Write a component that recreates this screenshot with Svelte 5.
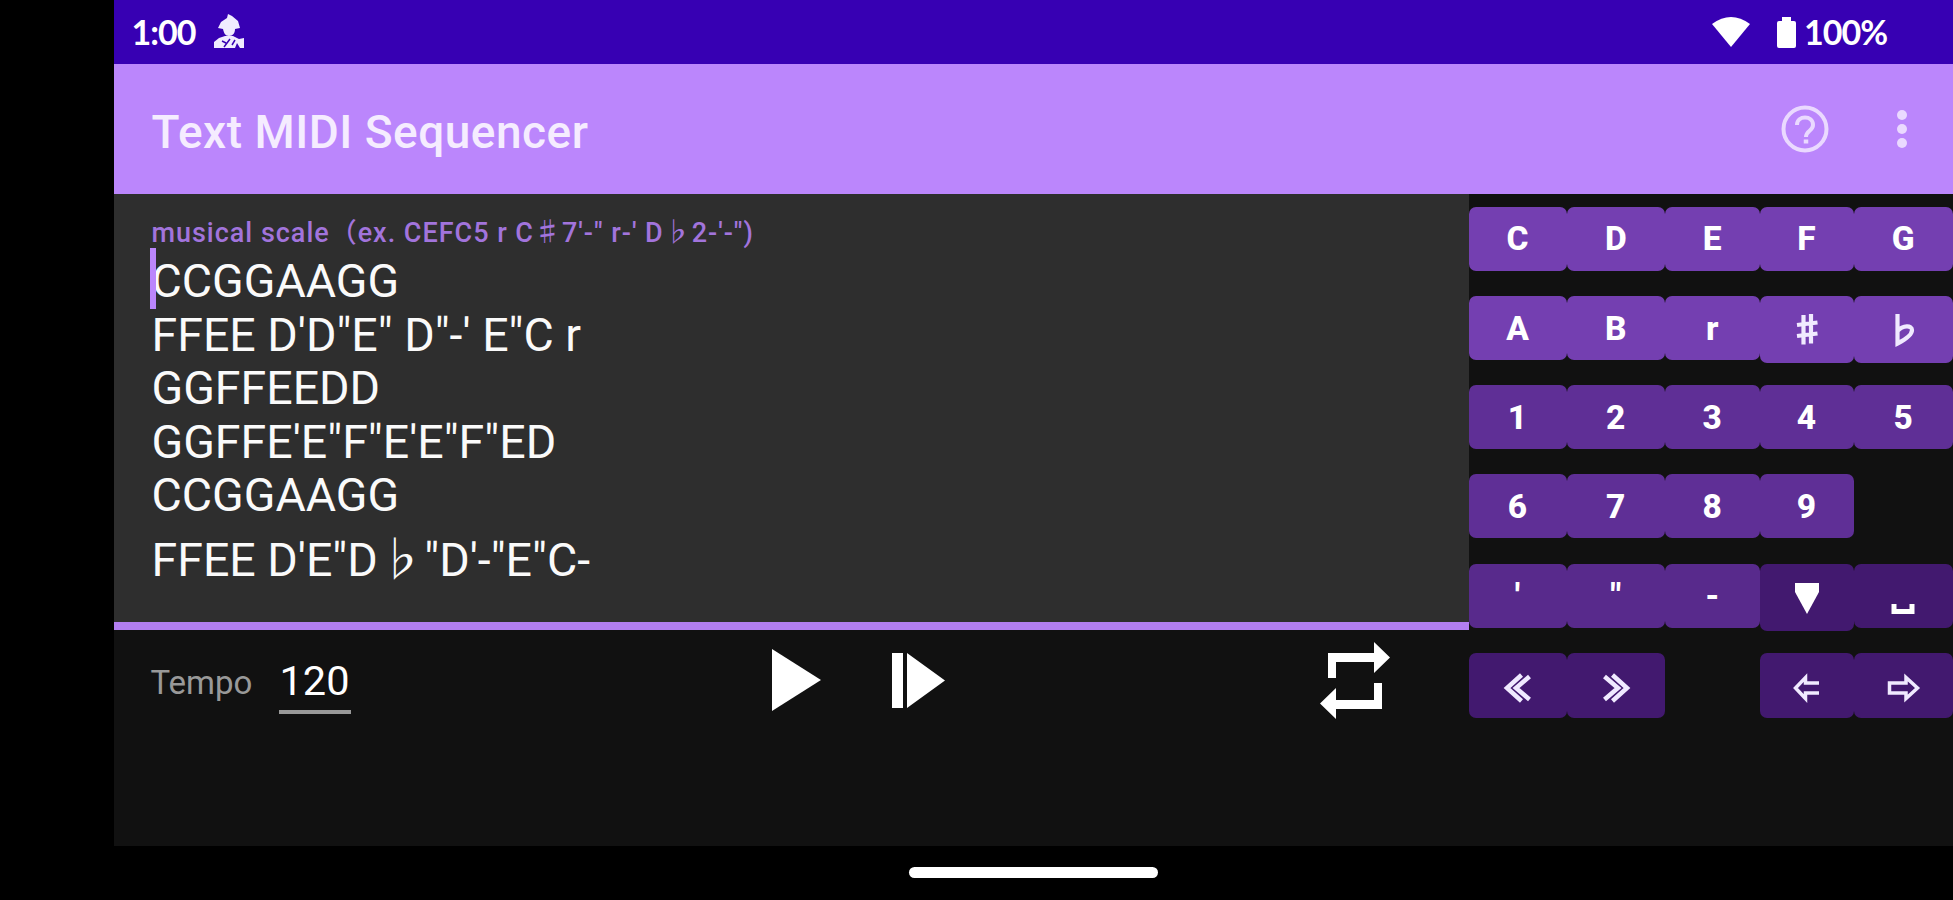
<script lang="ts">
    type Key = { label?: string; icon?: string; tone: string; tall?: boolean; name?: string };

    const hint = 'musical scale\uff08ex. CEFC5 r C♯7\'-" r-\' D♭2-\'-")';

    const lines = [
        'CCGGAAGG',
        'FFEE D\'D"E" D"-\' E"C r',
        'GGFFEEDD',
        'GGFFE\'E"F"E\'E"F"ED',
        'CCGGAAGG',
        'FFEE D\'E"D♭"D\'-"E"C-'
    ];

    const keys: (Key | null)[][] = [
        ['C', 'D', 'E', 'F', 'G'].map((label) => ({ label, tone: 'note' })),
        [
            { label: 'A', tone: 'note' },
            { label: 'B', tone: 'note' },
            { label: 'r', tone: 'note' },
            { icon: 'sharp', tone: 'note', tall: true, name: 'Sharp' },
            { icon: 'flat', tone: 'note', tall: true, name: 'Flat' }
        ],
        ['1', '2', '3', '4', '5'].map((label) => ({ label, tone: 'octave' })),
        [...['6', '7', '8', '9'].map((label) => ({ label, tone: 'octave' })), null],
        [
            { label: "'", tone: 'length' },
            { label: '"', tone: 'length' },
            { label: '-', tone: 'length' },
            { icon: 'enter', tone: 'edit', tall: true, name: 'New line' },
            { icon: 'space', tone: 'edit', name: 'Space' }
        ],
        [
            { icon: 'first', tone: 'edit', name: 'To start' },
            { icon: 'last', tone: 'edit', name: 'To end' },
            null,
            { icon: 'left', tone: 'edit', name: 'Left' },
            { icon: 'right', tone: 'edit', name: 'Right' }
        ]
    ];

    // paths on a 36x36 box
    const icons: Record<string, string> = {
        sharp: 'M14.5 4v29.5M22 3v29.500M8 14l20.500-2.500M8 25l20.500-2.500',
        flat: 'M12.500 3v29.500c8-4 14.500-8.500 14.500-13.500 0-5-9-5-14.500 1',
        enter: 'M6 4h24v9L18 35 6 13z',
        space: 'M9 26v7.500h18V26',
        first: 'M21.500 7L7 20l14.500 13M29.500 8.500L16 20l13.500 11.500',
        last: 'M14.500 7L29 20 14.500 33M6.500 8.500L20 20 6.500 31.500',
        left: 'M30 15H16.500V9.500L6.500 20l10 10.500V25H30',
        right: 'M4.500 15H21V9.500L32.500 20 21 30.500V25H4.500z'
    };
</script>

<div class="screen">
    <div class="main">
        <div class="status">
            <div class="status-side">
                <span class="clock">1:00</span>
                <svg width="32" height="36" viewBox="0 0 32 36" fill="#f0ecff">
                    <path d="M15 0l4 2 6 5 2 7-5 1c0 4-2 7-6 7s-5-3-6-7l-5-1 3-6 6-4z" />
                    <path d="M1 34v-6l5-4 6-2h8l6 3 5-1v10h-4l-3-5-2 5z" />
                    <path d="M9 27l4 2M17 25l-3 4-3 4M22 26l-3 5" stroke="#3700b3" stroke-width="1.500" fill="none" />
                </svg>
            </div>
            <div class="status-side right">
                <svg class="wifi" width="38" height="30" viewBox="0 0 38 30" fill="#fff">
                    <path d="M0 7Q19-7 38 7L19 30z" />
                </svg>
                <svg class="battery" width="19" height="31" viewBox="0 0 19 31" fill="#fff">
                    <path d="M5 0h9v4h3q2 0 2 2v23q0 2-2 2H2q-2 0-2-2V6q0-2 2-2h3z" />
                </svg>
                <span class="percent">100%</span>
            </div>
        </div>

        <header class="appbar">
            <h1>Text MIDI Sequencer</h1>
            <button class="help" aria-label="Help">
                <svg width="48" height="48" viewBox="0 0 48 48" fill="none" stroke="#ead9ff">
                    <circle cx="24" cy="24" r="21.500" stroke-width="4" />
                    <path d="M16 20c0-10 16-10 16 0 0 6-7 5.500-7 12" stroke-width="4" />
                    <path d="M25 34.500v4" stroke-width="4.500" />
                </svg>
            </button>
            <button class="more" aria-label="More options">
                <svg width="12" height="40" viewBox="0 0 12 40" fill="#ead9ff">
                    <circle cx="6" cy="6" r="5" />
                    <circle cx="6" cy="20" r="5" />
                    <circle cx="6" cy="34" r="5" />
                </svg>
            </button>
        </header>

        <div class="body">
            <div class="left">
                <div class="editor">
                    <div class="hint">{hint}</div>
                    <div class="score">
                        {#each lines as line, i}
                            <div class="line" class:has-flat={line.includes('♭')}>
                                {#if i === 0}<span class="caret"></span>{/if}{line}
                            </div>
                        {/each}
                    </div>
                </div>

                <div class="transport">
                    <span class="tempo-label">Tempo</span>
                    <span class="tempo-value">120</span>
                    <button class="play" aria-label="Play">
                        <svg width="49" height="62" viewBox="0 0 49 62" fill="#fff"><path d="M0 0l49 31L0 62z" /></svg>
                    </button>
                    <button class="step" aria-label="Play from cursor">
                        <svg width="53" height="55" viewBox="0 0 53 55" fill="#fff">
                            <path d="M0 0h11v55H0zM15 0l38 27.500L15 55z" />
                        </svg>
                    </button>
                    <button class="repeat" aria-label="Repeat">
                        <svg width="70" height="77" viewBox="0 0 70 77" fill="#fff">
                            <path d="M8 11h46V0l16 15.500L54 31V20H16v16H8z" />
                            <path d="M62 41v26H16v10L0 61.500 16 46v12h38V41z" />
                        </svg>
                    </button>
                </div>
            </div>

            <div class="keypad">
                {#each keys as row}
                    <div class="row">
                        {#each row as key}
                            {#if key}
                                <button class="key {key.tone}" class:tall={key.tall} aria-label={key.name}>
                                    {#if key.icon}
                                        <svg class={key.icon} width="36" height="36" viewBox="0 0 36 36">
                                            <path d={icons[key.icon]} />
                                        </svg>
                                    {:else}
                                        <span class="label">{key.label}</span>
                                    {/if}
                                </button>
                            {:else}
                                <span></span>
                            {/if}
                        {/each}
                    </div>
                {/each}
            </div>
        </div>
    </div>

    <div class="nav"><span class="pill"></span></div>
</div>

<style>
    :global(body) {
        background: #000;
    }

    .screen {
        width: 1953px;
        height: 900px;
        box-sizing: border-box;
        padding-left: 113.5px;
        overflow: hidden;
        background: #000;
        color: #fff;
        font-family: Roboto, 'Noto Sans CJK JP', sans-serif;
    }

    .main {
        height: 846px;
        display: flex;
        flex-direction: column;
        background: #111;
    }

    button {
        border: none;
        padding: 0;
        margin: 0;
        background: none;
        color: inherit;
        font: inherit;
    }

    svg {
        display: block;
        overflow: visible;
    }

    .status {
        height: 64px;
        flex: none;
        display: flex;
        justify-content: space-between;
        background: #3700b3;
        font-family: Lato, sans-serif;
        font-weight: 700;
        font-size: 34px;
        line-height: 64px;
    }

    .status-side {
        display: flex;
        align-items: center;
        padding-left: 18px;
    }

    .status-side.right {
        padding: 0 64px 0 0;
    }

    .clock {
        width: 81px;
        letter-spacing: -1px;
    }

    .battery {
        margin: 0 8px 0 27px;
    }

    .percent {
        width: 85px;
        letter-spacing: -1px;
    }

    .appbar {
        height: 130px;
        flex: none;
        display: flex;
        align-items: center;
        padding: 0 45px 0 38px;
        background: #bb86fc;
    }

    h1 {
        flex: 1;
        margin: 5px 0 0;
        font-size: 46px;
        font-weight: 500;
        letter-spacing: 0.5px;
        color: #f5ecff;
    }

    .more {
        margin-left: 67px;
    }

    .body {
        flex: 1;
        display: flex;
    }

    .left {
        width: 1355px;
    }

    .editor {
        height: 436px;
        box-sizing: border-box;
        padding: 19px 38px 0;
        background: #2e2e2e;
        border-bottom: 8px solid #b27ef0;
    }

    .hint {
        height: 42px;
        font-size: 27px;
        font-weight: 500;
        line-height: 40px;
        letter-spacing: 0.98px;
        color: #a274dc;
        white-space: pre;
    }

    .score {
        font-size: 46.500px;
        color: #fafafa;
    }

    .line {
        position: relative;
        height: 53.500px;
        line-height: 53.500px;
        white-space: pre;
    }

    .line.has-flat {
        height: 75px;
        line-height: 75px;
    }

    .caret {
        position: absolute;
        left: -2px;
        top: -7px;
        width: 6px;
        height: 61px;
        background: #bb86fc;
    }

    .transport {
        height: 100px;
        display: flex;
        align-items: center;
        padding-left: 37px;
    }

    .tempo-label {
        width: 128px;
        margin-top: 5px;
        font-size: 33px;
        color: #999;
    }

    .tempo-value {
        width: 72px;
        height: 57px;
        margin-top: 7px;
        line-height: 56px;
        font-size: 41.500px;
        text-align: center;
        border-bottom: 4px solid #999;
    }

    .play {
        margin-left: 421px;
    }

    .step {
        margin-left: 71px;
    }

    .repeat {
        margin-left: 375px;
    }

    .keypad {
        flex: 1;
        display: flex;
        flex-direction: column;
        padding-top: 12.5px;
    }

    .row {
        height: 89.300px;
        display: grid;
        grid-template-columns: 98px 98.500px 94.500px 94px 99.500px;
        align-items: start;
    }

    .row:last-child .key {
        height: 65.500px;
    }

    .key {
        height: 64px;
        display: flex;
        align-items: center;
        justify-content: center;
        border-radius: 7px;
        font-size: 33.500px;
        font-weight: 800;
        line-height: 1;
    }

    .key.tall {
        height: 67px;
    }

    .label {
        padding-top: 1px;
    }

    .key svg {
        fill: none;
        stroke: #f0eaff;
        stroke-width: 3.500;
    }

    .key svg.sharp,
    .key svg.flat {
        stroke-width: 4.200;
    }

    .key svg.first,
    .key svg.last {
        stroke-width: 4.500;
    }

    .key svg.enter {
        fill: #fff;
        stroke: none;
    }

    .key svg.space {
        stroke: #fff;
        stroke-width: 5;
    }

    .note {
        background: #743fb1;
    }

    .octave {
        background: #5f2f96;
    }

    .length {
        background: #582a8c;
    }

    .edit {
        background: #42196f;
    }

    .nav {
        height: 54px;
        display: flex;
        justify-content: center;
        align-items: flex-start;
    }

    .pill {
        width: 249px;
        height: 11px;
        margin-top: 21px;
        border-radius: 6px;
        background: #fff;
    }
</style>
